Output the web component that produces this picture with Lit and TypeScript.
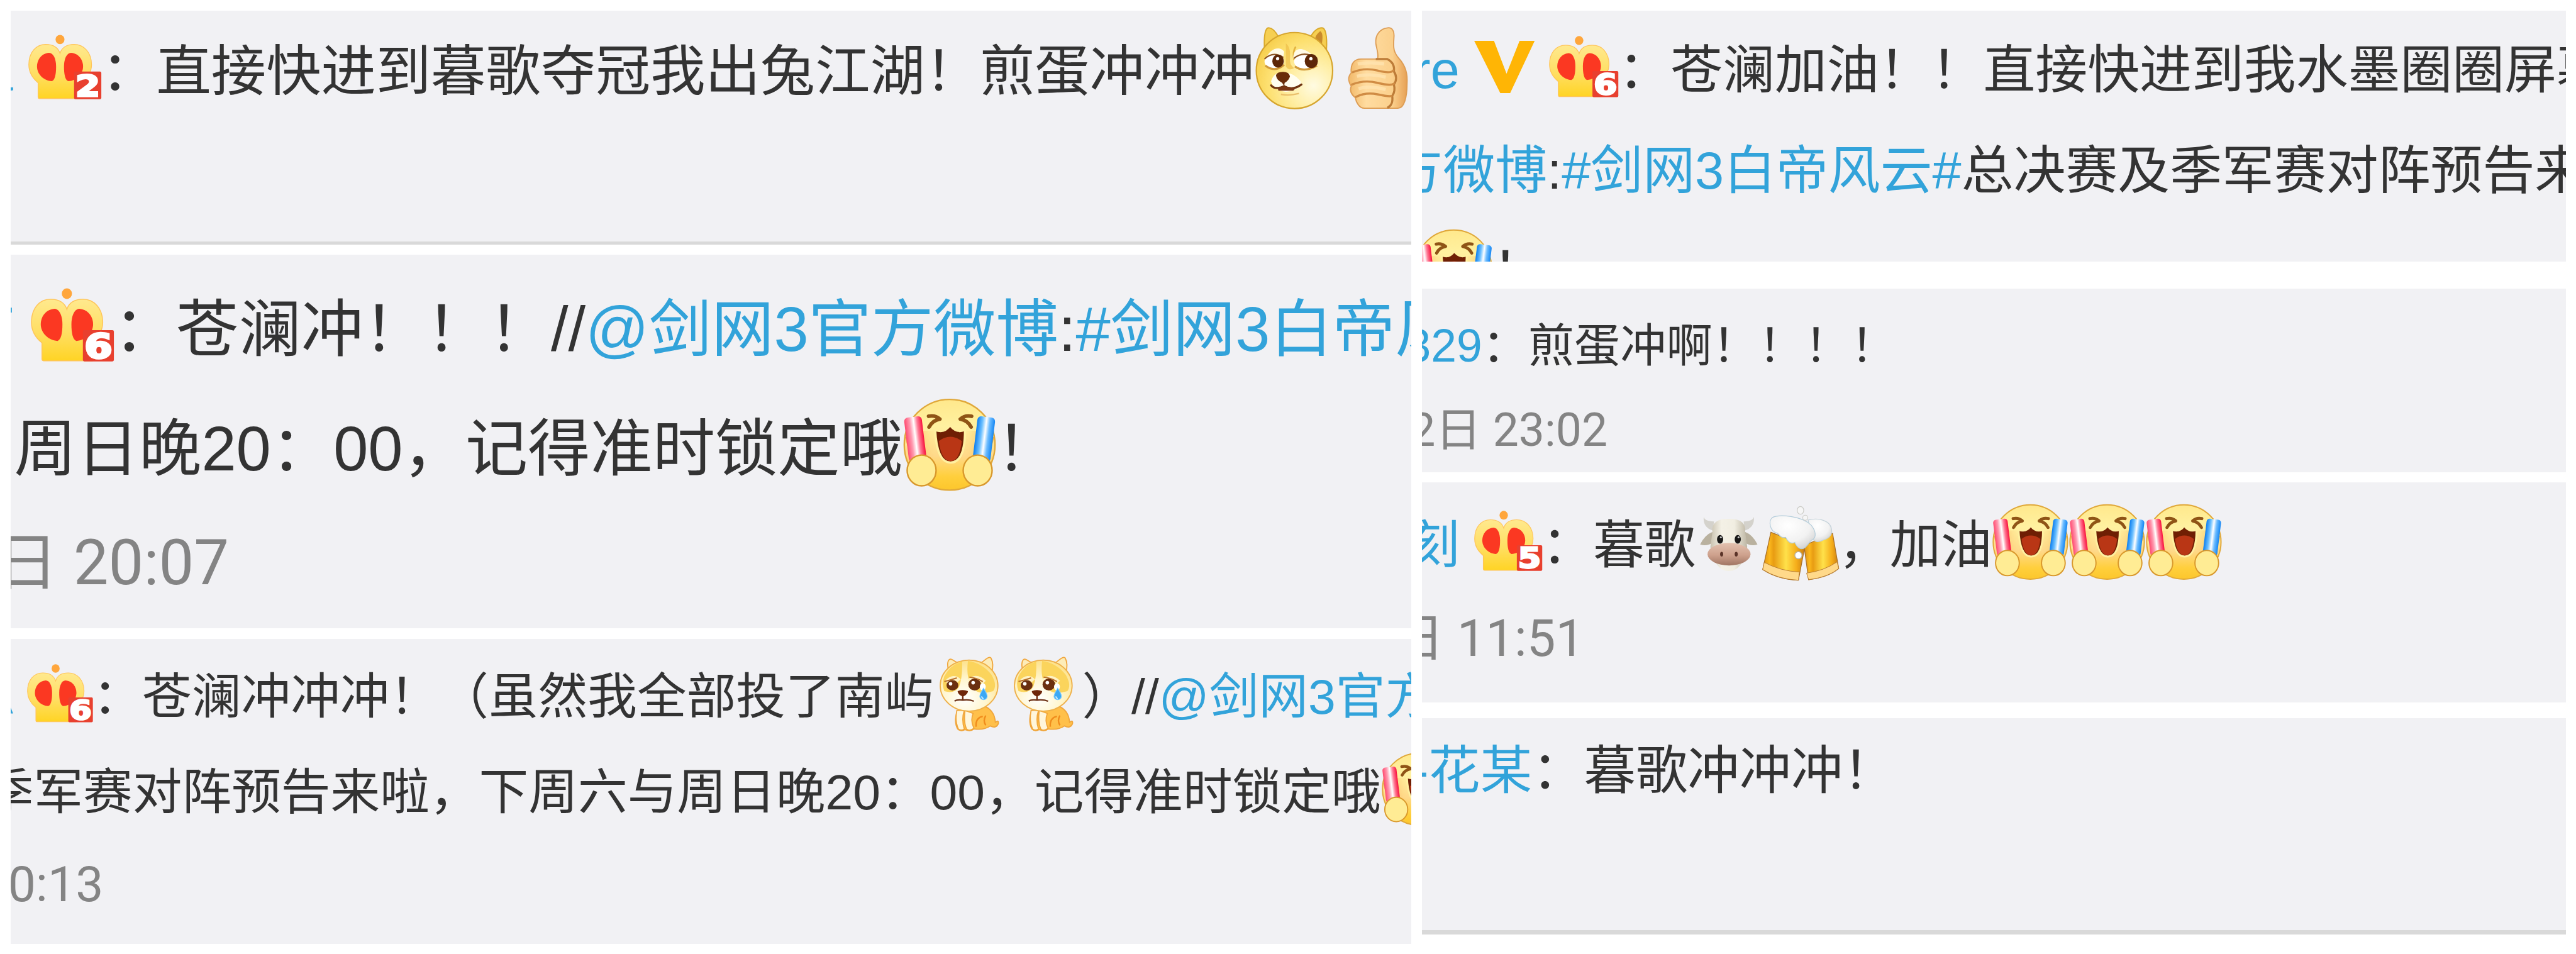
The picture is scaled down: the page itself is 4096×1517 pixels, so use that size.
import { css, html, LitElement, nothing } from 'lit';
import {customElement, property} from 'lit/decorators.js'

const laugh = html`
<svg viewBox="0 0 100 100">
  <defs>
    <linearGradient id="face" x1="0" y1="0" x2="0" y2="1">
      <stop offset="0" stop-color="#ffe88c"/><stop offset=".3" stop-color="#fff1a0"/>
      <stop offset=".62" stop-color="#ffd98a"/><stop offset=".85" stop-color="#ffcf3c"/><stop offset="1" stop-color="#fcc62c"/>
    </linearGradient>
    <linearGradient id="blush" x1="0" y1="0" x2="1" y2="0">
      <stop offset="0" stop-color="#f08a3c" stop-opacity=".75"/><stop offset=".34" stop-color="#ffd070" stop-opacity="0"/>
      <stop offset=".66" stop-color="#ffd070" stop-opacity="0"/><stop offset="1" stop-color="#d8902c" stop-opacity=".75"/>
    </linearGradient>
    <linearGradient id="red" x1="0" y1="0" x2="1" y2="0">
      <stop offset="0" stop-color="#ff4a70"/><stop offset=".3" stop-color="#ff9ab0"/><stop offset=".52" stop-color="#fff"/>
      <stop offset=".72" stop-color="#ff7c96"/><stop offset="1" stop-color="#f80f3c"/>
    </linearGradient>
    <linearGradient id="blue" x1="0" y1="0" x2="1" y2="0">
      <stop offset="0" stop-color="#0c7ef0"/><stop offset=".3" stop-color="#6cc0ff"/><stop offset=".52" stop-color="#fff"/>
      <stop offset=".72" stop-color="#6cbcff"/><stop offset="1" stop-color="#1486f4"/>
    </linearGradient>
  </defs>
  <circle cx="50.5" cy="50" r="48.600" fill="url(#face)" stroke="#e0a83a" stroke-width="1.600"/>
  <path d="M3 42 A48 48 0 0 0 98 42 L82 35 L18 35Z" fill="url(#blush)"/>
  <g fill="none" stroke="#8f5416" stroke-width="4" stroke-linecap="round" stroke-linejoin="round">
    <path d="M28 19.500 Q35 18 40 22.500 Q32 24 28.500 31"/>
    <path d="M74 19.500 Q67 18 62 22.500 Q70 24 73.500 31"/>
  </g>
  <path d="M35 34 Q45 38 51 29 Q58 38 67 34 C67 54 63 69 51.500 69 C40 69 36 54 35 34Z" fill="#6f1f04" stroke="#fff0a0" stroke-width="2.400"/>
  <path d="M39 46 Q51 37 63.500 46 C62 60 58 67.500 51.500 67.500 C45 67.500 40.500 60 39 46Z" fill="#b93615"/>
  <g transform="rotate(-7 14 42)"><rect x="4" y="20" width="19" height="48" rx="4" fill="url(#red)"/></g>
  <g transform="rotate(7 87 42)"><rect x="78" y="20" width="19" height="48" rx="4" fill="url(#blue)"/></g>
  <g fill="#ffec94" stroke="#d9982c" stroke-width="1.600">
    <ellipse cx="20.500" cy="77.500" rx="15.500" ry="16.500"/>
    <ellipse cx="80.500" cy="77.500" rx="15.500" ry="16.500"/>
  </g>
</svg>`

const doge = html`
<svg viewBox="0 0 100 100">
  <defs>
    <radialGradient id="fur" cx=".75" cy=".7" r=".8">
      <stop offset="0" stop-color="#fffbe2"/><stop offset=".35" stop-color="#fff0ac"/>
      <stop offset=".75" stop-color="#fde070"/><stop offset="1" stop-color="#f7d050"/>
    </radialGradient>
  </defs>
  <g fill="#f6cf52" stroke="#d9a92c" stroke-width="1.500">
    <path d="M12 27 C11 10 13 1 17 1 C22 1 26 6 30 14Z"/>
    <path d="M87.500 27 C88.500 10 86 1 82 1 C76 1 71 6 67 14Z"/>
  </g>
  <path d="M80 5 C76 8 73 12 74 16 L82 20 C83 12 83 7 80 5Z" fill="#c98a2c"/>
  <ellipse cx="48.500" cy="53" rx="46.500" ry="46.300" fill="url(#fur)" stroke="#d6a52e" stroke-width="1.700"/>
  <path d="M38 20 Q44 24 43 38 Q42 46 48 50 Q42 54 38 48Z" fill="#eebd48" opacity=".7"/>
  <path d="M50 24 Q46 30 48 40" stroke="#e3b23e" stroke-width="2" fill="none"/>
  <path d="M14 38 C18 27 30 22 36 30 L34 42Z" fill="#fffbe8"/>
  <path d="M47 38 C47 26 56 23 68 32 L72 40Z" fill="#fffbe8"/>
  <ellipse cx="24" cy="42" rx="12" ry="9" fill="#fff"/>
  <ellipse cx="62" cy="42" rx="14" ry="9.500" fill="#fff"/>
  <path d="M13 47 Q24 56 36 46 M49 48 Q60 56 76 47" stroke="#d19a3c" stroke-width="2.500" fill="none"/>
  <path d="M12 39 Q22 29 35 37 M48 38 Q60 28 76 38" stroke="#8a5220" stroke-width="1.600" fill="none"/>
  <ellipse cx="28.500" cy="41.500" rx="7" ry="8" fill="#5c2608"/>
  <ellipse cx="69" cy="41.500" rx="8" ry="8.500" fill="#5c2608"/>
  <circle cx="28" cy="38.500" r="2" fill="#fff"/>
  <circle cx="68.500" cy="38.500" r="2" fill="#fff"/>
  <path d="M20 66 Q24 54 34 56 Q46 54 56 66 Q58 76 38 79 Q22 76 20 66Z" fill="#fffdf0"/>
  <path d="M26 59 Q27 54.500 34.500 54.500 Q42 54.500 43 60 Q42 65 36.500 68 L36 72 L33.500 68 Q27 65 26 59Z" fill="#692c0a"/>
  <path d="M20 71 Q25 77 36 72 Q46 78 57 70" stroke="#6e3310" stroke-width="2.400" fill="none" stroke-linecap="round"/>
  <path d="M28 74.500 L36 72.500 L50 74.500 L47 77.500 H29Z" fill="#7a3614"/>
  <path d="M32 82 Q42 84 54 81" stroke="#eabf6a" stroke-width="1.800" fill="none"/>
</svg>`

const thumb = html`
<svg viewBox="0 0 100 100">
  <defs>
    <linearGradient id="skin" x1="0" y1="0" x2="1" y2="0">
      <stop offset="0" stop-color="#f2b96a"/><stop offset=".3" stop-color="#ffdca0"/>
      <stop offset=".75" stop-color="#fbd08c"/><stop offset="1" stop-color="#e6a055"/>
    </linearGradient>
  </defs>
  <path d="M62 1 C68 0 71 5 70 14 C69 26 70 31 76 38 C84 47 87 56 86 70 C86 84 83 99 75 99 H34 C28 99 24 92 23 86 C18 82 16 77 18 72 C14 66 14 60 18 56 C17 44 22 39 30 39 L50 39 C52 34 49 27 48 20 C47 10 53 2 62 1Z"
    fill="url(#skin)" stroke="#dd9d55" stroke-width="1.400"/>
  <path d="M48 39 H62 C68 42 71 47 70 54 C74 60 73 66 70 70 C72 77 70 81 68 84 C69 92 67 96 62 98.500" fill="none" stroke="#bd7c38" stroke-width="2.600"/>
  <g fill="none" stroke="#d08c44" stroke-width="2.600" stroke-linecap="round">
    <path d="M20 55 Q34 49 50 53 T69 53"/>
    <path d="M19 70 Q34 64 50 68 T70 69"/>
    <path d="M24 85 Q36 79 50 82 T67 84"/>
  </g>
  <path d="M26 45 Q40 42 58 45 M25 60 Q40 56 60 61 M27 75 Q40 71 60 76" stroke="#ffe6b4" stroke-width="4" fill="none" opacity=".7"/>
</svg>`

const sadDog = html`
<svg viewBox="0 0 100 100">
  <defs>
    <radialGradient id="head" cx=".42" cy=".75" r=".75">
      <stop offset="0" stop-color="#fff"/><stop offset=".5" stop-color="#fff6d0"/><stop offset="1" stop-color="#fde18a"/>
    </radialGradient>
  </defs>
  <g stroke="#f0a63c" stroke-width="1.500">
    <path d="M34 69 C28 78 28 90 32 97 Q36 101 42 98 Q50 101 54 97 Q68 99 76 93 Q84 97 87 90 Q88 84 83 88 Q82 72 68 66Z" fill="#ffc04a"/>
    <path d="M31 72 Q28 86 33 97 Q37 100 41 97 Q37 84 41 72Z M42 72 Q40 88 44 97 Q49 101 54 96 Q49 86 53 76Z" fill="#fff6dc"/>
    <path d="M20 20 C17 8 19 1 24 3 L36 10Z" fill="#fdecb8"/>
    <path d="M62 9 C68 5 74 -2 77 1 C80 6 80 14 78 22Z" fill="#fdecb8"/>
    <path d="M57 94 Q56 82 66 80 M70 79 Q66 86 70 92" fill="none" stroke="#f08c1c" stroke-width="2"/>
  </g>
  <ellipse cx="47.500" cy="38.500" rx="39" ry="34.500" fill="url(#head)" stroke="#eeb04a" stroke-width="1.500"/>
  <path d="M38 6 Q22 10 14 26 Q10 36 14 46 Q28 50 34 40 Q39 26 38 6Z" fill="#fbd45c"/>
  <path d="M46 5 Q66 8 78 24 Q86 38 80 46 Q62 52 52 42 Q43 28 46 5Z" fill="#fbd45c"/>
  <path d="M17 34 Q27 24 34 32 M48 32 Q58 24 68 34" stroke="#fff2c4" stroke-width="6" fill="none"/>
  <ellipse cx="25" cy="38" rx="8" ry="7" fill="#6b2f10"/>
  <ellipse cx="55" cy="37" rx="8.500" ry="8" fill="#6b2f10"/>
  <ellipse cx="66" cy="40" rx="4" ry="5" fill="#fff"/>
  <circle cx="22.500" cy="36" r="2.400" fill="#fff"/>
  <circle cx="53" cy="34.500" r="2.400" fill="#fff"/>
  <path d="M14 33 Q22 31 31 28 M48 27 Q58 28 66 33" stroke="#b8702c" stroke-width="1.700" fill="none"/>
  <path d="M32 46 Q39 43 46 46 Q46 50 40 53 V58 H38 V53 Q32 50 32 46Z" fill="#6e260a"/>
  <path d="M28 59.500 Q31 57 39 58 Q48 57 54 59.500" stroke="#6e3318" stroke-width="2" fill="none"/>
  <path d="M67 42 C71 48 72 51 72 53 A5 4.500 0 0 1 62 53 C62 50 64 47 67 42Z" fill="#3ba8f4" stroke="#7ccaff" stroke-width="1"/>
  <path d="M64.500 53 Q65 55.500 67 56" stroke="#d4f0ff" stroke-width="1.600" fill="none"/>
</svg>`

const cow = html`
<svg viewBox="0 0 130 107">
  <defs>
    <linearGradient id="hide" x1="0" y1="0" x2="1" y2="0">
      <stop offset="0" stop-color="#c9c2b0"/><stop offset=".3" stop-color="#f4f1e6"/>
      <stop offset=".65" stop-color="#f1eee2"/><stop offset="1" stop-color="#bdb6a4"/>
    </linearGradient>
    <linearGradient id="muzzle" x1="0" y1="0" x2="0" y2="1">
      <stop offset="0" stop-color="#e3c2b0"/><stop offset=".55" stop-color="#cda08c"/><stop offset="1" stop-color="#a07562"/>
    </linearGradient>
  </defs>
  <path d="M16 1 Q18 10 36 10 L34 28 Q14 22 16 1Z" fill="#d4d2cc"/>
  <path d="M114 1 Q112 10 94 10 L96 28 Q116 22 114 1Z" fill="#d4d2cc"/>
  <path d="M34 30 Q18 36 9 55 Q22 60 36 50Z" fill="#b9b19f"/>
  <path d="M96 30 Q112 36 121 55 Q108 60 94 50Z" fill="#b9b19f"/>
  <path d="M65 5 C86 5 99 12 97 30 L101 60 Q92 107 65 107 Q38 107 29 60 L33 30 C31 12 44 5 65 5Z" fill="url(#hide)"/>
  <ellipse cx="65.500" cy="74" rx="42" ry="22" fill="url(#muzzle)"/>
  <ellipse cx="48" cy="45" rx="6" ry="8.500" fill="#181818"/>
  <ellipse cx="82.500" cy="45" rx="6" ry="8.500" fill="#181818"/>
  <circle cx="49.500" cy="41" r="1.800" fill="#d8d8d8"/>
  <circle cx="84" cy="41" r="1.800" fill="#d8d8d8"/>
  <ellipse cx="51" cy="74" rx="3" ry="4.500" fill="#5a3328"/>
  <ellipse cx="79.500" cy="74" rx="3" ry="4.500" fill="#5a3328"/>
</svg>`

const beer = html`
<svg viewBox="0 0 150 150">
  <defs>
    <linearGradient id="ale" x1="0" y1="0" x2="1" y2="0">
      <stop offset="0" stop-color="#d98e12"/><stop offset=".16" stop-color="#fbb71c"/><stop offset=".26" stop-color="#e89c12"/>
      <stop offset=".55" stop-color="#ffe14a"/><stop offset=".8" stop-color="#f5ad1a"/><stop offset="1" stop-color="#c87c10"/>
    </linearGradient>
    <radialGradient id="foam" cx=".4" cy=".3" r=".8">
      <stop offset="0" stop-color="#fff"/><stop offset=".6" stop-color="#f2f2f2"/><stop offset="1" stop-color="#cfcfcf"/>
    </radialGradient>
  </defs>
  <path d="M82 82 L138 58 L150 127 Q130 144 91 149Z" fill="url(#ale)" stroke="#a8702a" stroke-width="1.500"/>
  <path d="M87 136 Q120 132 147 114 L150 127 Q130 144 91 149Z" fill="#ffd98a" stroke="#b87c30" stroke-width="1.200"/>
  <path d="M17 56 L84 82 L71 150 Q30 148 1 129Z" fill="url(#ale)" stroke="#a8702a" stroke-width="1.500"/>
  <path d="M4 115 Q36 132 73 134 L71 150 Q30 148 1 129Z" fill="#ffd98a" stroke="#b87c30" stroke-width="1.200"/>
  <path d="M90 32 C112 26 134 34 136 50 C138 62 130 68 120 71 C112 76 104 76 98 68Z" fill="url(#foam)" stroke="#c4d2da" stroke-width="1.500"/>
  <path d="M20 27 C34 20 78 24 96 42 C106 54 106 66 99 70 C94 72 91 80 84 86 C76 92 68 86 64 76 C56 80 50 74 46 66 C38 68 34 62 30 58 C14 54 12 34 20 27Z" fill="url(#foam)" stroke="#b4cddb" stroke-width="1.500"/>
  <ellipse cx="75" cy="13" rx="6.500" ry="7.500" fill="#f6f6f6" stroke="#cdcdc8" stroke-width="1.600"/>
  <circle cx="84.500" cy="27.500" r="5" fill="#f6f6f6" stroke="#cdcdc8" stroke-width="1.400"/>
  <circle cx="71" cy="101" r="7" fill="#fff" stroke="#b8b2a2" stroke-width="1.800"/>
</svg>`

const verified = html`
<svg viewBox="0 0 116 100">
  <path d="M0 0 H38 L62 63 L87 0 H116 L69 100 H50Z" fill="#ffb505"/>
</svg>`

const art: Record<string, unknown> = {laugh, doge, thumb, 'sad-dog': sadDog, cow, beer, verified}

@customElement('emoji-icon')
export class EmojiIcon extends LitElement {
  @property({reflect: true})
  public name = 'laugh'

  // layout containment keeps the box's bottom edge on the text baseline
  static styles = css`
  :host {
    display: inline-block;
    contain: layout;
    width: 1.495em;
    height: 1.495em;
    vertical-align: -0.34em;
    white-space: normal;
  }
  :host([name=cow]) {
    width: 1.3em;
    height: 1.07em;
    vertical-align: -0.17em;
  }
  :host([name=verified]) {
    width: 1.162em;
    height: 1em;
    vertical-align: -0.09em;
  }
  svg {
    display: block;
    width: 100%;
    height: 100%;
    overflow: visible;
  }
  `

  render() {
    return art[this.name] ?? nothing
  }
}

@customElement('crown-badge')
export class CrownBadge extends LitElement {
  @property({type: Number})
  public level = 1

  static styles = css`
  :host {
    display: inline-block;
    contain: layout;
    width: 1.33em;
    height: 1.18em;
    vertical-align: -0.17em;
    white-space: normal;
  }
  svg {
    display: block;
    width: 100%;
    height: 100%;
    overflow: visible;
  }
  .level {
    font-family: "DejaVu Sans", sans-serif;
    font-size: 54px;
    font-weight: 700;
    fill: #fff;
    stroke: #fff;
    stroke-width: 3.500px;
    stroke-linejoin: miter;
    text-anchor: middle;
  }
  `

  render() {
    return html`
    <svg viewBox="0 0 134 118">
      <defs>
        <linearGradient id="gold" x1="0" y1="0" x2="0" y2="1">
          <stop offset="0" stop-color="#ffe98e"/>
          <stop offset=".55" stop-color="#ffde62"/>
          <stop offset="1" stop-color="#ffd424"/>
        </linearGradient>
      </defs>
      <ellipse cx="58.200" cy="8.600" rx="8.200" ry="8.600" fill="#ffa63c"/>
      <path d="M18 114 V88 C7 79 1 68 1 55 C1 32 14 17.500 32 17.500 C46 17.500 55 24 58.200 34 C61 24 70 17.500 84 17.500 C102 17.500 116 32 116 55 C116 68 109 79 99 88 V117 H21 Q18 117 18 114Z"
        fill="url(#gold)" stroke="#ffc55a" stroke-width="1.500"/>
      <path d="M38 33 C24 34 16 46 16 58 C16 72 28 84 43 85 C49 83 51 72 51 58 C51 44 46 33 38 33Z" fill="#fb3822"/>
      <path d="M78.500 33 C92.500 34 100.500 46 100.500 58 C100.500 72 88.500 84 73.500 85 C67.500 83 65.500 72 65.500 58 C65.500 44 70.500 33 78.500 33Z" fill="#fb3822"/>
      <rect x="84" y="67.500" width="50" height="50.500" rx="2.500" fill="#e8402f"/>
      <text class="level" transform="translate(109 112.500) scale(1.2 1)">${this.level}</text>
    </svg>
    `
  }
}

@customElement('app-root')
export class AppRoot extends LitElement {
  static styles = css`
  :host {
    display: block;
    height: 100vh;
    overflow: hidden;
    background: #fff;
  }
  .board {
    zoom: 0.790123;
    display: flex;
    gap: 21px;
    box-sizing: border-box;
    width: 5184px;
    height: 1920px;
    padding: 21px 20px 20px 21px;
    color: #333;
    font-family: "Liberation Sans", "Noto Sans CJK SC", sans-serif;
    text-spacing-trim: space-all;
    font-kerning: none;
  }
  .column {
    display: flex;
    flex-direction: column;
  }
  .left {
    width: 2819px;
  }
  .right {
    flex: 1;
    min-width: 0;
  }
  .panel {
    box-sizing: border-box;
    flex: none;
    overflow: hidden;
    background: #f1f1f4;
  }
  .ruled {
    border-bottom: 7px solid #d9d9d9;
  }
  .line {
    white-space: pre;
  }
  .time {
    color: #848484;
    font-family: Roboto, "Noto Sans CJK SC", sans-serif;
  }
  .link {
    color: #32a3da;
  }

  .rabbit {
    height: 471px;
    padding-top: 19px;
    font-size: 110.5px;
    line-height: 210px;
  }
  .canglan {
    height: 752px;
    margin-top: 21px;
    padding-top: 30px;
    font-size: 125.7px;
    line-height: 240px;
  }
  .canglan .time {
    line-height: 221px;
  }
  .nanyu {
    height: 614px;
    margin-top: 21px;
    padding-top: 22px;
    font-size: 99.6px;
    line-height: 192px;
  }
  .nanyu .time {
    line-height: 176px;
  }

  .cheer {
    height: 505px;
    padding-top: 20px;
    font-size: 104.9px;
    line-height: 202px;
  }
  .egg {
    height: 369px;
    margin-top: 55px;
    padding-top: 30px;
    font-size: 92.7px;
    line-height: 170px;
  }
  .toast {
    height: 443px;
    margin-top: 21px;
    padding-top: 31px;
    font-size: 103px;
    line-height: 190px;
  }
  .toast .time {
    line-height: 187px;
  }
  .flower {
    height: 435px;
    margin-top: 32px;
    padding-top: 10px;
    font-size: 104.3px;
    line-height: 190px;
  }
  .flower.ruled {
    border-bottom-width: 9px;
  }
  `

  // the panels are cut from wider ones, so a line may start left of its panel
  line(start: number, content: unknown, kind = '') {
    return html`<div class="line ${kind}" style="margin-left: ${start}px">${content}</div>`
  }

  render() {
    return html`
    <div class="board">
      <div class="column left">
        <div class="panel rabbit ruled">
          ${this.line(-56, html`<span class="link">a </span><crown-badge level="2"></crown-badge>：直接快进到暮歌夺冠我出兔江湖！煎蛋冲冲冲<emoji-icon name="doge"></emoji-icon><emoji-icon name="thumb"></emoji-icon>`)}
        </div>
        <div class="panel canglan">
          ${this.line(-71, html`<span class="link">T </span><crown-badge level="6"></crown-badge>：苍澜冲！！！//<span class="link">@剑网3官方微博</span>:<span class="link">#剑网3白帝风云#</span>`)}
          ${this.line(7.5, html`周日晚20：00，记得准时锁定哦<emoji-icon name="laugh"></emoji-icon>！`)}
          ${this.line(-30, '日 20:07', 'time')}
        </div>
        <div class="panel nanyu">
          ${this.line(-61, html`<span class="link">A </span><crown-badge level="6"></crown-badge>：苍澜冲冲冲！（虽然我全部投了南屿<emoji-icon name="sad-dog"></emoji-icon><emoji-icon name="sad-dog"></emoji-icon>）//<span class="link">@剑网3官方微博</span>`)}
          ${this.line(-53, html`季军赛对阵预告来啦，下周六与周日晚20：00，记得准时锁定哦<emoji-icon name="laugh"></emoji-icon>`)}
          ${this.line(-5, '0:13', 'time')}
        </div>
      </div>

      <div class="column right">
        <div class="panel cheer">
          ${this.line(-17, html`<span class="link">re </span><emoji-icon name="verified"></emoji-icon> <crown-badge level="6"></crown-badge>：苍澜加油！！直接快进到我水墨圈圈屏幕`)}
          ${this.line(-62, html`<span class="link">方微博</span>:<span class="link">#剑网3白帝风云#</span>总决赛及季军赛对阵预告来啦`)}
          ${this.line(-14.5, html`<emoji-icon name="laugh"></emoji-icon>！`)}
        </div>
        <div class="panel egg">
          ${this.line(-33, html`<span class="link">329</span>：煎蛋冲啊！！！！`)}
          ${this.line(-24.5, '2日 23:02', 'time')}
        </div>
        <div class="panel toast">
          ${this.line(-26.5, html`<span class="link">刻 </span><crown-badge level="5"></crown-badge>：暮歌<emoji-icon name="cow"></emoji-icon><emoji-icon name="beer"></emoji-icon>，加油<emoji-icon name="laugh"></emoji-icon><emoji-icon name="laugh"></emoji-icon><emoji-icon name="laugh"></emoji-icon>`)}
          ${this.line(-57.5, '日 11:51', 'time')}
        </div>
        <div class="panel flower ruled">
          ${this.line(-21, html`<span class="link">-花某</span>：暮歌冲冲冲！`)}
        </div>
      </div>
    </div>
    `
  }
}
